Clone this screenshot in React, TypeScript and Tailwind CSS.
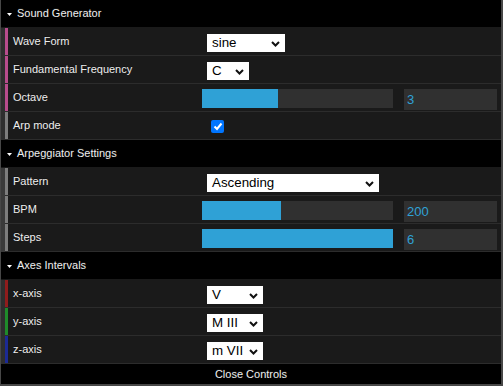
import { ReactNode } from "react"

const font = { fontFamily: '"Liberation Sans", Arial, sans-serif' }

function Header({ title }: { title: string }) {
  return (
    <div className="flex h-[28px] items-center bg-black border-b border-[#1a1a1a] text-[11px] text-[#eeeeee] [text-shadow:0_-1px_0_#111]">
      <svg width="16" height="28" viewBox="0 0 16 28" className="shrink-0">
        <path d="M6 13 L11 13 L8.5 16 Z" fill="#ffffff" />
      </svg>
      <span>{title}</span>
    </div>
  )
}

function Row({ label, color, children }: { label: string; color: string; children?: ReactNode }) {
  return (
    <div className="flex h-[28px] bg-[#1a1a1a] border-b border-[#2c2c2c]">
      <div className={`w-[3px] shrink-0 ${color}`} />
      <div className="w-[199px] shrink-0 pl-[5px] leading-[27px] text-[11px] text-[#eeeeee] [text-shadow:0_-1px_0_#111]">
        {label}
      </div>
      <div className="flex-1 min-w-0">{children}</div>
    </div>
  )
}

function Select({ value, width }: { value: string; width: string }) {
  return (
    <div className={`relative mt-[6px] h-[18px] bg-white ${width}`}>
      <div className="h-full pl-[5px] leading-[18px] text-[13.33px] text-black">{value}</div>
      <svg width="9" height="6" viewBox="0 0 9 6" className="absolute right-[5px] top-[7px]">
        <path d="M1 1 L4.5 4.5 L8 1" stroke="#111" strokeWidth="2" fill="none" />
      </svg>
    </div>
  )
}

function Slider({ fill, value }: { fill: string; value: string }) {
  return (
    <div className="flex h-full items-start pt-[5px] -ml-[5px] pr-[4px]">
      <div className="h-[19px] w-[191px] bg-[#303030]">
        <div className={`h-full bg-[#2fa1d6] ${fill}`} />
      </div>
      <div className="ml-auto h-[21px] w-[93px] bg-[#303030] pl-[3px] leading-[21px] text-[13px] text-[#2fa1d6]">
        {value}
      </div>
    </div>
  )
}

export default function App() {
  return (
    <div className="h-[386px] w-[503px] overflow-hidden bg-[#474747]" style={font}>
      <div className="ml-[1px] w-[500px]">
        <Header title="Sound Generator" />
        <div className="pl-[4px] bg-[#2e2e2e]">
          <Row label="Wave Form" color="bg-[#b84c8c]">
            <Select value="sine" width="w-[78px]" />
          </Row>
          <Row label="Fundamental Frequency" color="bg-[#b84c8c]">
            <Select value="C" width="w-[42px]" />
          </Row>
          <Row label="Octave" color="bg-[#b84c8c]">
            <Slider fill="w-[76px]" value="3" />
          </Row>
          <Row label="Arp mode" color="bg-[#7d7d7d]">
            <div className="pl-[4px] pt-[8px]">
              <div className="flex h-[13px] w-[13px] items-center justify-center rounded-[2px] bg-[#0075ff]">
                <svg width="10" height="9" viewBox="0 0 10 9">
                  <path d="M1.5 4.5 L4 7 L8.5 1.5" stroke="#ffffff" strokeWidth="2" fill="none" />
                </svg>
              </div>
            </div>
          </Row>
        </div>
        <Header title="Arpeggiator Settings" />
        <div className="pl-[4px] bg-[#3a3a3a]">
          <Row label="Pattern" color="bg-[#7d7d7d]">
            <Select value="Ascending" width="w-[172px]" />
          </Row>
          <Row label="BPM" color="bg-[#7d7d7d]">
            <Slider fill="w-[79px]" value="200" />
          </Row>
          <Row label="Steps" color="bg-[#7d7d7d]">
            <Slider fill="w-full" value="6" />
          </Row>
        </div>
        <Header title="Axes Intervals" />
        <div className="pl-[4px] bg-[#2e2e2e]">
          <Row label="x-axis" color="bg-[#8f1c1c]">
            <Select value="V" width="w-[56px]" />
          </Row>
          <Row label="y-axis" color="bg-[#1f8a2a]">
            <Select value="M III" width="w-[56px]" />
          </Row>
          <Row label="z-axis" color="bg-[#1c2a94]">
            <Select value="m VII" width="w-[56px]" />
          </Row>
        </div>
        <div className="h-[20px] bg-black text-center leading-[20px] text-[11px] text-[#eeeeee] [text-shadow:0_-1px_0_#111]">
          Close Controls
        </div>
      </div>
    </div>
  )
}
